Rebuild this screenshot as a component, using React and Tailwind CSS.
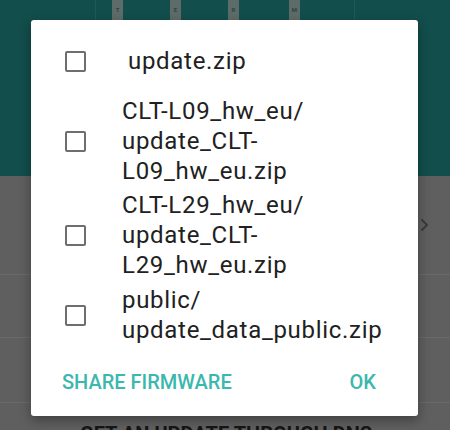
import React from "react";

function Box() {
  return <div className="w-[21px] h-[21px] border-[2.5px] border-[#6e6e6e] rounded-[2px] shrink-0" />;
}

export default function App() {
  const font = { fontFamily: "Roboto, 'Noto Sans', sans-serif" };
  return (
    <div className="relative w-[450px] h-[430px] overflow-hidden bg-[#5f5f5f]" style={font}>
      {/* background page */}
      <div className="h-[176px] bg-[#124e4c] flex flex-col">
        <div className="h-[20px] flex">
          <div className="ml-[95px] w-px h-full bg-[#1e5957]" />
          <div className="ml-[16px] w-[11px] h-full bg-[#5d6b69] flex justify-center pt-[7px]">
            <span className="text-[6px] leading-none text-[#33413f] font-bold">T</span>
          </div>
          <div className="ml-[47px] w-[11px] h-full bg-[#5d6b69] flex justify-center pt-[7px]">
            <span className="text-[6px] leading-none text-[#33413f] font-bold">E</span>
          </div>
          <div className="ml-[47px] w-[11px] h-full bg-[#5d6b69] flex justify-center pt-[7px]">
            <span className="text-[6px] leading-none text-[#33413f] font-bold">R</span>
          </div>
          <div className="ml-[50px] w-[11px] h-full bg-[#5d6b69] flex justify-center pt-[7px]">
            <span className="text-[6px] leading-none text-[#33413f] font-bold">M</span>
          </div>
          <div className="ml-[54px] w-px h-full bg-[#1e5957]" />
        </div>
      </div>
      <div className="flex flex-col">
        <div className="h-[99px] border-b border-[#676b6c] flex items-center justify-end pr-[21px]">
          <svg width="9" height="14" viewBox="0 0 9 14" fill="none">
            <path d="M1.5 1.5 L7 7 L1.5 12.5" stroke="#3a3a3a" strokeWidth="2" />
          </svg>
        </div>
        <div className="h-[63px] border-b border-[#676b6c]" />
        <div className="h-[65px] border-b border-[#676a70]" />
        <div className="pt-[21px] pl-[80px] text-[20px] font-bold leading-[20px] text-[#151515] whitespace-nowrap">
          GET AN UPDATE THROUGH DNS
        </div>
      </div>

      {/* dialog */}
      <div className="absolute left-[31px] top-[20px] w-[387px] h-[396px] bg-white rounded-[3px] shadow-[0_4px_12px_rgba(0,0,0,0.35)] flex flex-col pt-[16px]">
        <div className="h-[50px] flex items-center pl-[34px]">
          <Box />
          <span className="ml-[42px] text-[24px] leading-[30px] tracking-[0.7px] text-[#212121]">update.zip</span>
        </div>
        <div className="mt-[10px] flex items-center pl-[34px]">
          <Box />
          <span className="ml-[36px] text-[24px] leading-[30px] tracking-[0.7px] text-[#212121]">
            CLT-L09_hw_eu/
            <br />
            update_CLT-
            <br />
            L09_hw_eu.zip
          </span>
        </div>
        <div className="mt-[4px] flex items-center pl-[34px]">
          <Box />
          <span className="ml-[36px] text-[24px] leading-[30px] tracking-[0.7px] text-[#212121]">
            CLT-L29_hw_eu/
            <br />
            update_CLT-
            <br />
            L29_hw_eu.zip
          </span>
        </div>
        <div className="mt-[5px] flex items-center pl-[34px]">
          <Box />
          <span className="ml-[36px] text-[24px] leading-[30px] tracking-[0.7px] text-[#212121]">
            public/
            <br />
            update_data_public.zip
          </span>
        </div>
        <div className="mt-[17px] h-[40px] flex items-center justify-between pl-[31px] pr-[42px]">
          <span className="text-[20px] font-medium text-[#3bb8ae] leading-none">SHARE FIRMWARE</span>
          <span className="text-[20px] font-medium text-[#3bb8ae] leading-none">OK</span>
        </div>
      </div>
    </div>
  );
}
